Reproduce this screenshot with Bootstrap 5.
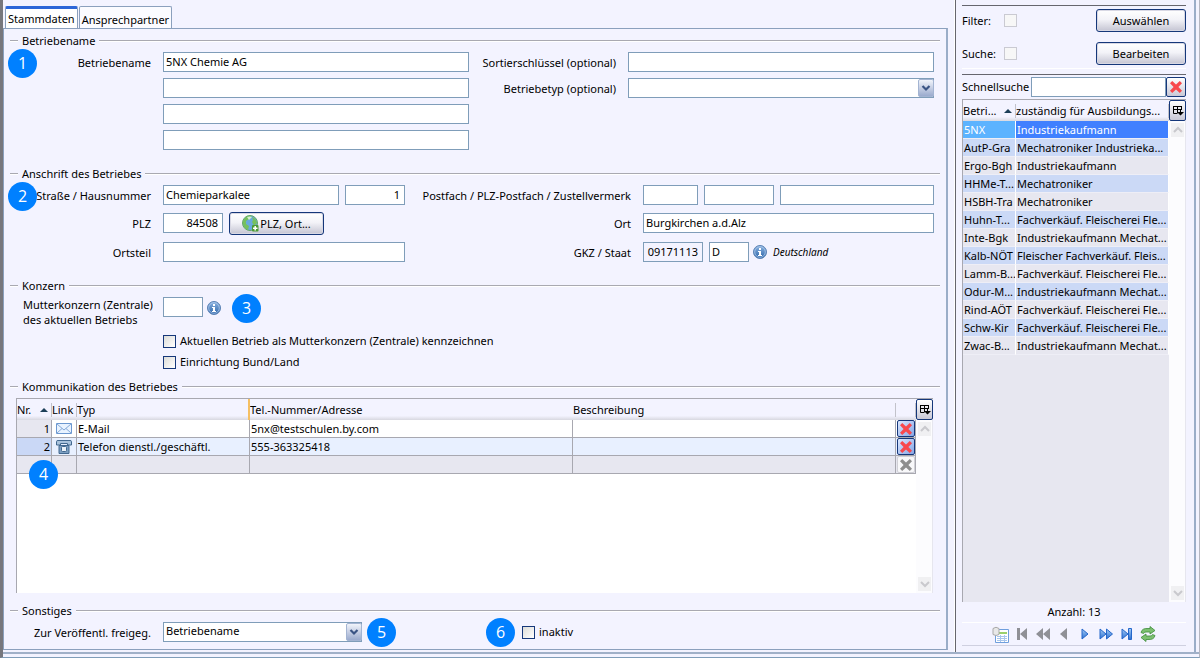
<!DOCTYPE html>
<html lang="de">
<head>
<meta charset="utf-8">
<meta name="viewport" content="width=device-width, initial-scale=1">
<title>Betriebe – Stammdaten</title>
<link href="https://cdn.jsdelivr.net/npm/bootstrap@5.3.0/dist/css/bootstrap.min.css" rel="stylesheet">
<style>
:root{--pane:#f3f3ff;--line:#7f9db9;--grey:#a8a8b0;--navy:#15377a}
body{background:var(--pane);color:#000;font-family:"Noto Sans","Open Sans",sans-serif;font-size:11px;line-height:14px}
.app{border-left:3px solid #77777d;border-right:1px solid #b4b6c0;border-bottom:1px solid #7f9db9;padding-bottom:3px}
.inner{border-bottom:2px solid #a0b0c8}

/* editor pane */
.editor{border-right:1px solid #fff;padding:6px 6px 2px 0}
.tabs{padding-left:2px;gap:1px;height:22px}
.tabs .nav-link{border:1px solid #8ba0bd;border-bottom:0;border-radius:2px 2px 0 0;padding:4px 2px 0;height:22px;color:#000;background:#fbfbff}
.tabs .nav-link.active{border-top:3px solid #2c66d8;padding-top:0;background:#fff}
.sheet{border:1px solid #8ba0bd;border-right:2px solid #9aadc8;padding:1px 12px 7px 0}
.legend-row{flex:none;height:22px;gap:4px;margin:0 -6px 0 6px;font-size:11px;font-weight:400;line-height:22px}
.legend-row::before,.legend-row::after{content:"";height:2px;background:#a9a9b1;border-bottom:1px solid #fff;width:8px}
.legend-row::after{flex:1}
.last-legend{margin-top:7px}
.half{width:50%;position:relative}
.mb-group{margin-bottom:13px}
.stack{gap:6px}
.wide-stack{gap:7px}
.tight{gap:4px}

/* form controls */
.lbl{width:147px;margin-right:12px;padding-top:1px;text-align:right;flex:none}
.lbl-wide{width:162px;display:flex;justify-content:flex-end;white-space:nowrap}
.fld{height:20px;border:1px solid var(--line);border-radius:0;background:#fff;padding:0 2px 2px;font:inherit;color:#000;min-width:0;outline:0}
.fld.flex-grow-1{width:0}
.num{text-align:right;padding-right:4px}
.w40{width:40px}.w55{width:55px}.w60{width:60px}.w70{width:70px}
.gkz{background:var(--pane)}
.tallrow{height:23px}
.tallrow .fld{margin-bottom:1px}
.pushbtn{height:23px;border:1px solid var(--navy);outline:0;border-radius:3px;background:linear-gradient(#fff,#f3f3f8 45%,#c4c4d2);color:#000;font:inherit;padding:0;box-shadow:inset 0 0 0 1px #d8d8e4}
.plz-btn{width:95px;gap:1px}
.chk{appearance:none;width:13px;height:13px;border:1px solid var(--navy);background:linear-gradient(135deg,#dcdcd8,#fff);margin:0;flex:none}
.chk:checked{background:var(--navy)}
.chk:disabled{border-color:#cacad2;background:#f7f7f7}
.combo{position:relative}
.combo .fld{appearance:none;width:100%}
.combo svg{position:absolute;right:0;top:1px;pointer-events:none}
.mutter{padding:0 0 0 19px;line-height:15px;white-space:nowrap}
.konzern{padding-bottom:7px}
.checks{margin:7px 0 0 159px;gap:7px}
.checks label,.inaktiv{gap:4px}
.vf{width:199px}
.sonst{height:20px}
.inaktiv{margin-left:7px}
.note{font-size:10px}

/* numbered markers */
.dot{width:29px;height:29px;margin:-3px 0;border-radius:50%;background:#0080ff;color:#fff;font:16px/28px "Open Sans","Noto Sans",sans-serif;text-align:center;flex:none}
.dot-left{position:absolute;left:4px;top:0}
.dot-grid{position:absolute;left:12px;top:64px}
.dot-three{margin-left:11px}
.dot-five{margin-left:5px}
.dot-six{margin-left:90px}

/* data grids */
.gridbox{border-left:1px solid var(--grey);border-top:1px solid var(--grey);background:#fff;min-height:120px}
.gridbox table{table-layout:fixed;width:100%;border-collapse:separate;border-spacing:0}
.gridbox th{height:21px;font-weight:400;background:linear-gradient(#f3f3ff 80%,#d8d8e0);padding:0;white-space:nowrap;overflow:hidden}
.gridbox th .cap{display:flex;align-items:center;justify-content:space-between;height:14px;border-right:1px solid #c2c2ca;padding-right:3px}
.gridbox td{height:18px;padding:0 1px;white-space:nowrap;overflow:hidden;line-height:14px}
.komm{margin:0 1px 0 12px}
.komm td{border-right:1px solid var(--grey);border-bottom:1px solid var(--grey)}
.komm td:first-child{text-align:right;background:#e7e7f0;padding-right:1px}
.komm .sel td{background:#e8f0ff}
.komm .sel td:first-child{background:#cad8f6}
.komm .blank td{background:#e7e7f0}
.komm th.mark-r{border-right:2px solid #f5bf63}
.komm td.tool,.komm td.pic{padding:0}
.c-nr{width:35px}.c-ln{width:25px}.c-ty{width:173px}.c-x{width:20px}.c-k{width:53px}
.pic svg{display:block;margin:auto}
.tool button,.colbtn,.clearbtn{display:flex;align-items:center;justify-content:center;border:1px solid var(--navy);border-radius:2px;padding:0;background:linear-gradient(#fff,#c8c8d6)}
.tool button{width:18px;height:17px;margin:auto;background:linear-gradient(135deg,#dce8ff,#86a6e6)}
.tool button:disabled{border-color:#d0d0d6;background:#f8f8fa}
.scrollcol{width:17px;background:#fcfcfe;border-right:1px solid #e6e6ee}
.colbtn{width:17px;height:21px}
.scrollcol .arrow{width:13px;height:14px;margin:2px;background:#f0f0f2;display:flex;align-items:center;justify-content:center}

/* search pane */
.finder{width:241px;border-left:1px solid #66666e;padding:5px 8px 6px 6px;border-right:2px solid #9aadc8;margin-right:3px}
.finder .rule{border-top:1px solid #66666e}
.finder .rule-w{border-top:1px solid #fff}
.filters{padding:3px 0;gap:10px}
.filters .pushbtn{width:90px}
.fl-lbl{width:42px}
.rule-qs{margin:5px 0 2px}
.qs{margin-bottom:2px}
.qs label{width:69px;flex:none}
.clearbtn{width:20px;height:20px;flex:none}
.listbox{background:#e7e7f0}
.list td{border-right:1px solid #fff;border-bottom:1px solid #eeeef6}
.list tr:nth-child(even) td{background:#cbd9f6}
.list tr.cur td{background:#4080ff;color:#fff}
.list tr.cur td:first-child{background:#5cb3ff}
.count{height:20px;line-height:20px}
.pager{height:22px}
.navbtn{border:0;background:none;padding:0;width:21px;height:18px;display:flex;align-items:center;justify-content:center}
.endline{border-top:1px solid #cfd0e0}
</style>
<script src="https://cdn.jsdelivr.net/npm/bootstrap@5.3.0/dist/js/bootstrap.bundle.min.js"></script>
</head>
<body>
<svg class="position-absolute" width="0" height="0" aria-hidden="true">
  <defs>
    <linearGradient id="gb" x2="0" y2="1"><stop stop-color="#a4ccf6"/><stop offset="1" stop-color="#2a6ed0"/></linearGradient>
    <linearGradient id="gi" x2="0" y2="1"><stop stop-color="#8db4e2"/><stop offset="1" stop-color="#2c64a8"/></linearGradient>
    <linearGradient id="gc" x2="0" y2="1"><stop stop-color="#f4f6fc"/><stop offset="1" stop-color="#98a8cc"/></linearGradient>
    <symbol id="cross" viewBox="0 0 14 14"><path d="M1 3.2 3.200 1 7 4.600 10.800 1 13 3.200 9.400 7 13 10.800 10.800 13 7 9.400 3.200 13 1 10.800 4.600 7Z"/></symbol>
    <symbol id="info" viewBox="0 0 14 14"><circle cx="7" cy="7" r="6.500" fill="url(#gi)" stroke="#5b82b4"/><circle cx="7" cy="7" r="5.300" fill="none" stroke="#b5cfee" stroke-width=".7"/><path d="M6 3h2v2H6zM5 6h3v4h1v1H5v-1h1V7H5z" fill="#fff"/></symbol>
    <symbol id="cols" viewBox="0 0 12 12"><path d="M1 1.500h9M1.500 1v7.500h4M5.500 1v7M9.500 1v4M1 4.500h9" fill="none" stroke="#000"/><path d="M5 7h7L8.500 10.500zM8 5h1v3H8z"/></symbol>
    <symbol id="up" viewBox="0 0 10 8"><path d="m1 6 4-4 4 4" fill="none" stroke="#c9c9cd" stroke-width="2"/></symbol>
    <symbol id="down" viewBox="0 0 10 8"><path d="m1 2 4 4 4-4" fill="none" stroke="#c9c9cd" stroke-width="2"/></symbol>
    <symbol id="combo" viewBox="0 0 16 18"><rect x=".5" y=".5" width="15" height="17" rx="1.500" fill="url(#gc)" stroke="#a3b4d2"/><path d="m4.500 7 3.500 3.500L11.500 7" fill="none" stroke="#3a5484" stroke-width="2.200"/></symbol>
    <symbol id="sort" viewBox="0 0 8 4"><path d="M0 4 4 0l4 4z" fill="#1c3f58"/></symbol>
  </defs>
</svg>
<div class="app min-vh-100 d-flex flex-column">
<div class="inner d-flex flex-grow-1">
  <main class="editor d-flex flex-column flex-grow-1">
    <ul class="nav tabs" role="tablist">
      <li class="nav-item"><button class="nav-link active" type="button" role="tab" aria-selected="true">Stammdaten</button></li>
      <li class="nav-item"><button class="nav-link" type="button" role="tab" aria-selected="false">Ansprechpartner</button></li>
    </ul>
    <form class="sheet d-flex flex-column flex-grow-1">
      <h2 class="legend-row d-flex align-items-center">Betriebename</h2>
      <section class="d-flex mb-group">
        <div class="half d-flex flex-column stack">
          <span class="dot dot-left">1</span>
          <div class="d-flex align-items-center"><label class="lbl" for="bn1">Betriebename</label><input class="fld flex-grow-1" id="bn1" value="5NX Chemie AG"></div>
          <div class="d-flex"><span class="lbl"></span><input class="fld flex-grow-1" aria-label="Betriebename Zeile 2"></div>
          <div class="d-flex"><span class="lbl"></span><input class="fld flex-grow-1" aria-label="Betriebename Zeile 3"></div>
          <div class="d-flex"><span class="lbl"></span><input class="fld flex-grow-1" aria-label="Betriebename Zeile 4"></div>
        </div>
        <div class="half d-flex flex-column stack">
          <div class="d-flex align-items-center"><label class="lbl" for="sort-key">Sortierschlüssel (optional)</label><input class="fld flex-grow-1" id="sort-key"></div>
          <div class="d-flex align-items-center"><label class="lbl" for="typ">Betriebetyp (optional)</label><div class="combo d-flex flex-grow-1"><select class="fld" id="typ"><option></option></select><svg width="16" height="18"><use href="#combo"/></svg></div></div>
        </div>
      </section>

      <h2 class="legend-row d-flex align-items-center">Anschrift des Betriebes</h2>
      <section class="d-flex mb-group">
        <div class="half d-flex flex-column wide-stack">
          <span class="dot dot-left">2</span>
          <div class="d-flex align-items-center pe-5"><label class="lbl" for="str">Straße / Hausnummer</label><div class="d-flex stack flex-grow-1 me-3"><input class="fld flex-grow-1" id="str" value="Chemieparkalee"><input class="fld num w60" aria-label="Hausnummer" value="1"></div></div>
          <div class="d-flex align-items-center tallrow"><label class="lbl" for="plz">PLZ</label><div class="d-flex align-items-center stack"><input class="fld num w60" id="plz" value="84508">
            <button class="pushbtn d-flex align-items-center justify-content-center plz-btn" type="button"><svg width="17" height="17" viewBox="0 0 17 17"><circle cx="8" cy="8" r="7.500" fill="#69a9dc" stroke="#63a567"/><path d="M2 4Q5 0 9 1L7 4 4 6v3l3 2-1 4Q0 12 1 6zM10 2q5 2 5 6l-3 3-2-4 1-2z" fill="#76c15e"/><path d="M5 2q3-1 5 0L7 5z" fill="#d7f0cf"/><rect x="10" y="10" width="6.500" height="6.500" rx="1" fill="#4c9a34"/><path d="M13.200 11v4.500M11 13.200h4.500" stroke="#fff" stroke-width="1.500"/></svg><span>PLZ, Ort...</span></button></div></div>
          <div class="d-flex align-items-center pe-5"><label class="lbl" for="ortsteil">Ortsteil</label><input class="fld flex-grow-1 me-3" id="ortsteil"></div>
        </div>
        <div class="half d-flex flex-column wide-stack">
          <div class="d-flex align-items-center"><label class="lbl lbl-wide" for="pf">Postfach / PLZ-Postfach / Zustellvermerk</label><div class="d-flex stack flex-grow-1"><input class="fld w55" id="pf"><input class="fld w70" aria-label="PLZ-Postfach"><input class="fld flex-grow-1" aria-label="Zustellvermerk"></div></div>
          <div class="d-flex align-items-center tallrow"><label class="lbl lbl-wide" for="ort">Ort</label><input class="fld flex-grow-1" id="ort" value="Burgkirchen a.d.Alz"></div>
          <div class="d-flex align-items-center"><label class="lbl lbl-wide" for="gkz">GKZ / Staat</label><div class="d-flex align-items-center stack"><input class="fld num w60 gkz" id="gkz" value="09171113" readonly><div class="d-flex align-items-center tight"><input class="fld w40" aria-label="Staat" value="D"><svg width="14" height="14"><use href="#info"/></svg></div><em class="note">Deutschland</em></div></div>
        </div>
      </section>

      <h2 class="legend-row d-flex align-items-center">Konzern</h2>
      <section class="konzern">
        <div class="d-flex">
          <label class="lbl text-start mutter" for="mk">Mutterkonzern (Zentrale)<br>des aktuellen Betriebs</label>
          <div class="d-flex tight"><input class="fld w40" id="mk"><svg class="mt-1" width="14" height="14"><use href="#info"/></svg></div><span class="dot dot-three">3</span>
        </div>
        <div class="checks d-flex flex-column align-items-start">
          <label class="d-flex align-items-center"><input class="chk" type="checkbox"><span>Aktuellen Betrieb als Mutterkonzern (Zentrale) kennzeichnen</span></label>
          <label class="d-flex align-items-center"><input class="chk" type="checkbox"><span>Einrichtung Bund/Land</span></label>
        </div>
      </section>

      <h2 class="legend-row d-flex align-items-center">Kommunikation des Betriebes</h2>
      <section class="gridbox komm d-flex flex-grow-1 position-relative">
        <div class="flex-grow-1">
        <table>
          <colgroup><col class="c-nr"><col class="c-ln"><col class="c-ty"><col><col><col class="c-x"></colgroup>
          <thead><tr><th><span class="cap">Nr.<svg width="8" height="4"><use href="#sort"/></svg></span></th><th><span class="cap pe-0">Link</span></th><th class="mark-r"><span class="cap border-0">Typ</span></th><th><span class="cap border-0">Tel.-Nummer/Adresse</span></th><th><span class="cap">Beschreibung</span></th><th><span class="cap"></span></th></tr></thead>
          <tbody>
            <tr><td>1</td><td class="pic"><svg width="16" height="11" viewBox="0 0 16 11"><path d="M.5.500h15v10H.5z" fill="#e9f3ff" stroke="#6c98d0"/><path d="m1 1 7 6 7-6M1 10l5-4.500M15 10l-5-4.500" fill="none" stroke="#84a9d8"/></svg></td><td>E-Mail</td><td>5nx@testschulen.by.com</td><td></td><td class="tool"><button type="button" aria-label="Zeile 1 löschen"><svg width="14" height="14" fill="#f8484d"><use href="#cross"/></svg></button></td></tr>
            <tr class="sel"><td>2</td><td class="pic"><svg width="16" height="14" viewBox="0 0 16 14"><path d="M.5 5V1.500Q.5.500 2 .5h12q1.500 0 1.500 1V5h-4V3.500h-7V5z" fill="#a9c3dd" stroke="#42688f"/><path d="M3 5.500h10v8H3z" fill="#7c9fc2" stroke="#42688f"/><rect x="5.500" y="6.500" width="5" height="5" rx="1" fill="#e9f1f8" stroke="#42688f"/></svg></td><td>Telefon dienstl./geschäftl.</td><td>555-363325418</td><td></td><td class="tool"><button type="button" aria-label="Zeile 2 löschen"><svg width="14" height="14" fill="#f8484d"><use href="#cross"/></svg></button></td></tr>
            <tr class="blank"><td></td><td></td><td></td><td></td><td></td><td class="tool"><button type="button" disabled aria-label="Leere Zeile löschen"><svg width="14" height="14" fill="#8e8e8e"><use href="#cross"/></svg></button></td></tr>
          </tbody>
        </table>
        </div>
        <div class="scrollcol d-flex flex-column justify-content-between">
          <div><button class="colbtn" type="button" aria-label="Spalten wählen"><svg width="12" height="12"><use href="#cols"/></svg></button><span class="arrow"><svg width="10" height="8"><use href="#up"/></svg></span></div>
          <span class="arrow"><svg width="10" height="8"><use href="#down"/></svg></span>
        </div>
        <span class="dot dot-grid">4</span>
      </section>

      <h2 class="legend-row d-flex align-items-center last-legend">Sonstiges</h2>
      <section class="d-flex align-items-center sonst">
        <label class="lbl" for="vf">Zur Veröffentl. freigeg.</label>
        <div class="combo vf"><select class="fld d-block" id="vf"><option>Betriebename</option></select><svg width="16" height="18"><use href="#combo"/></svg></div>
        <span class="dot dot-five">5</span><span class="dot dot-six">6</span>
        <label class="d-flex align-items-center inaktiv"><input class="chk" type="checkbox"><span>inaktiv</span></label>
      </section>
    </form>
  </main>

  <aside class="finder d-flex flex-column flex-shrink-0">
    <div class="rule"></div>
    <div class="filters d-flex flex-column">
      <div class="d-flex align-items-center"><label class="fl-lbl" for="f1">Filter:</label><input class="chk" type="checkbox" id="f1" disabled><button class="pushbtn ms-auto" type="button">Auswählen</button></div>
      <div class="d-flex align-items-center"><label class="fl-lbl" for="f2">Suche:</label><input class="chk" type="checkbox" id="f2" disabled><button class="pushbtn ms-auto" type="button">Bearbeiten</button></div>
    </div>
    <div class="rule-w"></div>
    <div class="rule rule-qs"></div>
    <div class="d-flex align-items-center qs"><label for="qs">Schnellsuche</label><input class="fld flex-grow-1" id="qs"><button class="clearbtn" type="button" aria-label="Suche leeren"><svg width="14" height="14" fill="#f8484d"><use href="#cross"/></svg></button></div>
    <div class="gridbox listbox list d-flex flex-grow-1">
      <div class="flex-grow-1">
      <table>
        <colgroup><col class="c-k"><col></colgroup>
        <thead><tr><th><span class="cap">Betri...<svg width="8" height="4"><use href="#sort"/></svg></span></th><th><span class="cap">zuständig für Ausbildungs...</span></th></tr></thead>
        <tbody>
          <tr class="cur"><td>5NX</td><td>Industriekaufmann</td></tr>
          <tr><td>AutP-Gra</td><td>Mechatroniker Industrieka...</td></tr>
          <tr><td>Ergo-Bgh</td><td>Industriekaufmann</td></tr>
          <tr><td>HHMe-T...</td><td>Mechatroniker</td></tr>
          <tr><td>HSBH-Tra</td><td>Mechatroniker</td></tr>
          <tr><td>Huhn-T...</td><td>Fachverkäuf. Fleischerei Fle...</td></tr>
          <tr><td>Inte-Bgk</td><td>Industriekaufmann Mechat...</td></tr>
          <tr><td>Kalb-NÖT</td><td>Fleischer Fachverkäuf. Fleis...</td></tr>
          <tr><td>Lamm-B...</td><td>Fachverkäuf. Fleischerei Fle...</td></tr>
          <tr><td>Odur-M...</td><td>Industriekaufmann Mechat...</td></tr>
          <tr><td>Rind-AÖT</td><td>Fachverkäuf. Fleischerei Fle...</td></tr>
          <tr><td>Schw-Kir</td><td>Fachverkäuf. Fleischerei Fle...</td></tr>
          <tr><td>Zwac-B...</td><td>Industriekaufmann Mechat...</td></tr>
        </tbody>
      </table>
      </div>
      <div class="scrollcol d-flex flex-column justify-content-between">
        <div><button class="colbtn" type="button" aria-label="Spalten wählen"><svg width="12" height="12"><use href="#cols"/></svg></button><span class="arrow"><svg width="10" height="8"><use href="#up"/></svg></span></div>
        <span class="arrow"><svg width="10" height="8"><use href="#down"/></svg></span>
      </div>
    </div>
    <div class="text-center count">Anzahl: 13</div>
    <div class="rule-w"></div>
    <div class="d-flex justify-content-center align-items-center pager">
      <button class="navbtn" type="button" aria-label="Liste"><svg width="17" height="17" viewBox="0 0 17 17"><path d="M3.500 3.500h13v13h-13z" fill="#fff" stroke="#6f9fdd"/><path d="M5 6h10v2H5z" fill="#9bd06c"/><path d="M5 10.500h10M5 12.500h10M5 14.500h10M8.500 9v7M12.500 9v7" stroke="#a8c6ec"/><path d="M1 2.500q3-2.500 6 0v6q-3 2-6 0z" fill="#e8e8e8" stroke="#a9a9a9"/></svg></button>
      <button class="navbtn" type="button" aria-label="Erster" disabled><svg width="14" height="14" viewBox="0 0 14 14" fill="#8f9096"><path d="M2 1h3v12H2zM12 1v12L5 7z"/></svg></button>
      <button class="navbtn" type="button" aria-label="Zurückblättern" disabled><svg width="16" height="14" viewBox="0 0 16 14" fill="#8f9096"><path d="M8 1v12L1 7zM15 1v12L8 7z"/></svg></button>
      <button class="navbtn" type="button" aria-label="Voriger" disabled><svg width="10" height="14" viewBox="0 0 10 14" fill="#8f9096"><path d="M8 1v12L1 7z"/></svg></button>
      <button class="navbtn" type="button" aria-label="Nächster"><svg width="10" height="14" viewBox="0 0 10 14" fill="url(#gb)" stroke="#2567ca"><path d="M2 2v10l6-5z"/></svg></button>
      <button class="navbtn" type="button" aria-label="Vorblättern"><svg width="16" height="14" viewBox="0 0 16 14" fill="url(#gb)" stroke="#2567ca"><path d="M2 2v10l6-5zM8.500 2v10l6-5z"/></svg></button>
      <button class="navbtn" type="button" aria-label="Letzter"><svg width="14" height="14" viewBox="0 0 14 14" fill="url(#gb)" stroke="#2567ca"><path d="M2 2v10l6-5zM8.500 1.500h3v11h-3z"/></svg></button>
      <button class="navbtn" type="button" aria-label="Aktualisieren"><svg width="16" height="16" viewBox="0 0 16 16" fill="#7cc070" stroke="#3c8b38" stroke-width=".8"><path d="M1 6.500Q2 2 8 2.500h2V.5l5 4-5 3.500V6H7Q4 5.500 3.500 7.500zM15 9.500q-1 4.500-7 4H6v2l-5-4L6 8v2h3q3 .5 3.500-1.500z"/></svg></button>
    </div>
    <div class="endline"></div>
  </aside>
</div>
</div>
</body>
</html>
